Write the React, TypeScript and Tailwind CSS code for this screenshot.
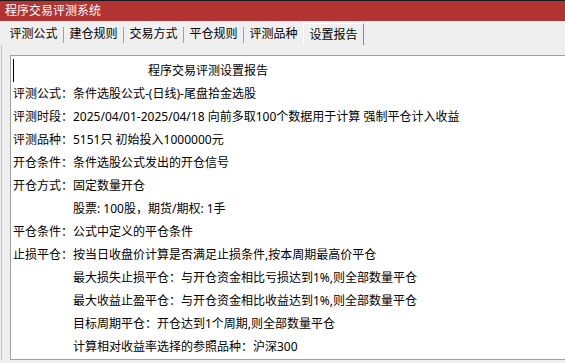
import React from 'react';

const tabs = ['评测公式', '建仓规则', '交易方式', '平仓规则', '评测品种'];

const lines: { text: string; indent?: boolean }[] = [
  { text: '评测公式：条件选股公式-(日线)-尾盘拾金选股' },
  { text: '评测时段：2025/04/01-2025/04/18 向前多取100个数据用于计算 强制平仓计入收益' },
  { text: '评测品种：5151只 初始投入1000000元' },
  { text: '开仓条件：条件选股公式发出的开仓信号' },
  { text: '开仓方式：固定数量开仓' },
  { text: '股票: 100股，期货/期权: 1手', indent: true },
  { text: '平仓条件：公式中定义的平仓条件' },
  { text: '止损平仓：按当日收盘价计算是否满足止损条件,按本周期最高价平仓' },
  { text: '最大损失止损平仓：与开仓资金相比亏损达到1%,则全部数量平仓', indent: true },
  { text: '最大收益止盈平仓：与开仓资金相比收益达到1%,则全部数量平仓', indent: true },
  { text: '目标周期平仓：开仓达到1个周期,则全部数量平仓', indent: true },
  { text: '计算相对收益率选择的参照品种：沪深300', indent: true },
];

const App: React.FC = () => {
  return (
    <div
      className="w-[565px] h-[363px] bg-[#efefef] overflow-hidden text-[12px] text-black"
      style={{ fontFamily: '"Noto Sans", "Noto Sans CJK SC", sans-serif' }}
    >
      {/* title bar */}
      <div className="h-[21px] bg-[#b33232] border-t border-[#1a1a1a] pl-[5px] leading-[19px] text-white">
        程序交易评测系统
      </div>

      {/* tabs */}
      <div className="flex h-[22px] mt-[2px] pl-[4px]">
        {tabs.map((t) => (
          <React.Fragment key={t}>
            <div className="w-[59px] text-center leading-[22px]">{t}</div>
            <span className="w-px h-[16px] mt-[4px] bg-[#a0a0a0]" />
          </React.Fragment>
        ))}
        <div className="w-[61px] -ml-px text-center leading-[21px] border-l border-white border-r border-r-[#8a8a8a] border-t border-t-white">
          设置报告
        </div>
      </div>

      {/* tab page */}
      <div className="ml-px pt-[10px] border-l border-[#c4c4c4]">
        <div className="ml-[8px] h-[305px] bg-white border-t border-l border-b border-[#a0a0a0] pt-[3px] pl-[2px]">
          <div className="flex h-[23px] items-center">
            <span className="w-px h-[23px] bg-black" />
            <span className="ml-[134px] leading-[23px]">程序交易评测设置报告</span>
          </div>
          {lines.map((l, i) => (
            <div key={i} className={`leading-[23px] whitespace-nowrap ${l.indent ? 'pl-[60px]' : ''}`}>
              {l.text}
            </div>
          ))}
        </div>
      </div>
    </div>
  );
};

export default App;
